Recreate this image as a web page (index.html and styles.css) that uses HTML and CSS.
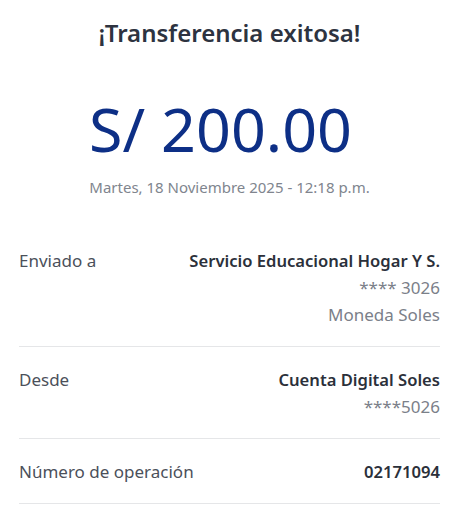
FILE: index.html
```html
<!DOCTYPE html>
<html lang="es">
<head>
    <meta charset="UTF-8">
    <meta name="viewport" content="width=device-width, initial-scale=1.0">
    <title>Transferencia exitosa</title>
    <link rel="stylesheet" href="styles.css">
</head>
<body>

<div class="container">
    <h1 class="title">¡Transferencia exitosa!</h1>
    <div class="amount">S/ 200.00</div>
    <p class="date">Martes, 18 Noviembre 2025 - 12:18 p.m.</p>

    <div class="row">
        <span class="label">Enviado a</span>
        <div class="value">
            <strong>Servicio Educacional Hogar Y S.</strong>
            <span>**** 3026</span>
            <span>Moneda Soles</span>
        </div>
    </div>

    <div class="row">
        <span class="label">Desde</span>
        <div class="value">
            <strong>Cuenta Digital Soles</strong>
            <span>****5026</span>
        </div>
    </div>

    <div class="row">
        <span class="label">Número de operación</span>
        <div class="value">
            <strong>02171094</strong>
        </div>
    </div>
</div>

</body>
</html>
```

FILE: styles.css
```css
/* Estilo General */
body {
    font-family: 'Noto Sans', 'Open Sans', sans-serif;
    margin: 0;
    padding: 0;
    background-color: #ffffff;
    color: #2c313b;
}
.container {
    padding: 0 26px 0 19px;
}

/* Cabecera */
.title {
    font-size: 24px;
    font-weight: 600;
    line-height: 32px;
    margin: 0;
    padding-top: 17px;
    text-align: center;
    color: #2d3340;
}
.amount {
    font-size: 61px;
    font-weight: 400;
    line-height: 72px;
    margin-top: 44px;
    padding-right: 18px;
    text-align: center;
    color: #0d2f86;
}
.date {
    font-size: 15px;
    line-height: 20px;
    margin: 12px 0 31px;
    text-align: center;
    color: #80858e;
}

/* Filas de detalle */
.row {
    display: flex;
    justify-content: space-between;
    align-items: flex-start;
    padding: 19px 0 18px;
    border-bottom: 1px solid #e5e6e8;
    font-size: 17px;
    line-height: 27px;
}
.row:first-of-type {
    padding-top: 0;
}
.label {
    color: #4b505a;
}
.value {
    display: flex;
    flex-direction: column;
    align-items: flex-end;
    text-align: right;
    color: #7b8089;
}
.value strong {
    font-weight: 600;
    font-size: 16.6px;
    color: #2b303a;
}
```
